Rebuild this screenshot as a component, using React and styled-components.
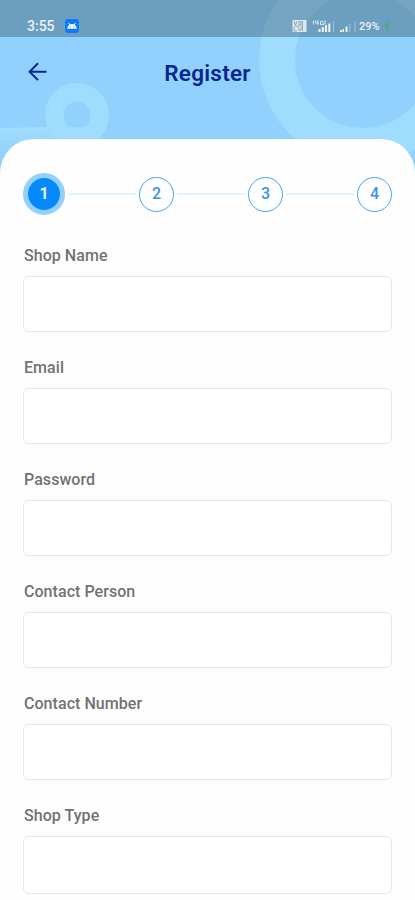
import React, { Fragment, useState } from "react";
import styled, { createGlobalStyle } from "styled-components";

const GlobalStyle = createGlobalStyle`
  * {
    box-sizing: border-box;
  }

  body {
    margin: 0;
    background-color: #fefefe;
    font-family: Roboto, "Liberation Sans", sans-serif;
  }
`;

const Screen = styled.div`
  position: relative;
  width: 100%;
  height: 900px;
  display: flex;
  flex-direction: column;
  overflow: hidden;
  background-color: #92d1fd;
`;

const Backdrop = styled.svg`
  position: absolute;
  top: 0;
  left: 0;
`;

const StatusBar = styled.div`
  position: relative;
  flex: none;
  height: 37px;
  display: flex;
  justify-content: space-between;
  align-items: flex-start;
  padding: 18px 25px 0 27px;
  background-color: rgba(47, 75, 92, 0.38);
`;

const StatusGroup = styled.div`
  display: flex;
  align-items: center;
  height: 16px;
`;

const Clock = styled.span`
  width: 38px;
  color: #e8f1f6;
  font-size: 14px;
  font-weight: 500;
`;

const Battery = styled.span`
  width: 25px;
  color: #e8f1f6;
  font-size: 11px;
  font-weight: 500;
`;

const Header = styled.header`
  position: relative;
  flex: none;
  height: 102px;
  display: grid;
  grid-template-columns: 48px 1fr 48px;
  align-items: start;
  padding: 22px 0 0;
`;

const BackButton = styled.button`
  display: flex;
  margin: 3px 0 0 27px;
  padding: 0;
  border: none;
  background: none;
  cursor: pointer;
`;

const Title = styled.h1`
  margin: 0;
  color: #08268f;
  font-size: 22.5px;
  font-weight: 600;
  line-height: 28px;
  letter-spacing: 0.25px;
  text-align: center;
`;

const Sheet = styled.main`
  position: relative;
  flex: 1;
  padding: 34px 23px 0;
  border-radius: 34px 34px 0 0;
  background-color: #fefefe;
`;

const Stepper = styled.div`
  display: flex;
  align-items: center;
  height: 42px;
`;

const Step = styled.button`
  flex: none;
  width: ${({ $active }) => ($active ? "42px" : "35px")};
  height: ${({ $active }) => ($active ? "42px" : "35px")};
  padding: 0;
  border: ${({ $active }) =>
    $active ? "5px solid #94d0fc" : "1.5px solid #4ba3ed"};
  border-radius: 50%;
  background-color: ${({ $active }) => ($active ? "#0789fb" : "#fefefe")};
  color: ${({ $active }) => ($active ? "#e9f7ff" : "#3694ea")};
  font-family: inherit;
  font-size: 16px;
  font-weight: ${({ $active }) => ($active ? 700 : 500)};
  line-height: 1;
  cursor: pointer;
`;

const StepLine = styled.div`
  flex: 1;
  height: 2px;
  margin: 0 3px;
  background-color: #e5f1fc;
`;

const Form = styled.form`
  display: flex;
  flex-direction: column;
  gap: 25px;
  margin-top: 31px;
`;

const Field = styled.label`
  display: flex;
  flex-direction: column;
  gap: 10px;
`;

const FieldName = styled.span`
  padding-left: 1px;
  color: #727272;
  font-size: 16px;
  font-weight: 500;
  line-height: 20px;
  letter-spacing: 0.05px;
`;

const Input = styled.input`
  width: 100%;
  height: ${({ $tall }) => ($tall ? "58px" : "56px")};
  margin-bottom: 1px;
  padding: 0 14px;
  border: 1.5px solid #e6e6e6;
  border-radius: 6px;
  background-color: #fff;
  color: #444;
  font-family: inherit;
  font-size: 16px;
  outline: none;
`;

const steps = [1, 2, 3, 4];

const fields = [
  { name: "shopName", label: "Shop Name" },
  { name: "email", label: "Email", type: "email" },
  { name: "password", label: "Password", type: "password" },
  { name: "contactPerson", label: "Contact Person" },
  { name: "contactNumber", label: "Contact Number", type: "tel" },
  { name: "shopType", label: "Shop Type", tall: true },
];

const HeaderArt = () => (
  <Backdrop width="415" height="180" viewBox="0 0 415 180" fill="none">
    <defs>
      <linearGradient id="tail" x1="0" y1="127" x2="0" y2="158" gradientUnits="userSpaceOnUse">
        <stop stopColor="#a0dcfd" />
        <stop offset="1" stopColor="#92d1fd" />
      </linearGradient>
    </defs>
    <circle cx="363" cy="60" r="86" stroke="#a0dcfd" strokeWidth="36" />
    <path d="M0 128 L48 127 H80 V160 H0 Z" fill="url(#tail)" />
    <circle cx="77" cy="115" r="22.5" stroke="#a0dcfd" strokeWidth="19" />
    <path d="M64 115a13 13.5 0 0 1 26 0c0 5-1 9-5 12H69c-4-3-5-7-5-12z" fill="#92d1fd" />
  </Backdrop>
);

const AndroidBadge = () => (
  <svg width="14" height="14" viewBox="0 0 14 14">
    <rect width="14" height="14" rx="3.5" fill="#0b7af4" />
    <path d="M2.2 9.8a4.8 4.8 0 0 1 9.6 0z" fill="#f3fbff" />
    <path d="M3.4 3.9l1.4 2M10.6 3.9l-1.4 2" stroke="#f3fbff" />
    <circle cx="5" cy="8" r=".6" fill="#0b7af4" />
    <circle cx="9" cy="8" r=".6" fill="#0b7af4" />
  </svg>
);

// volte badge, 4G signal and second sim signal
const SignalIcons = () => (
  <svg width="67" height="14" viewBox="0 0 67 14" fill="#edf5f8">
    <rect x="0.5" y="1" width="14" height="12" fill="#dce8ee" />
    <path
      d="M2 2l1.5 4L5 2M7 2.5h2v3H7zM2 8v4h3M6 8l2 4 2-4M2.5 7h7M10.5 2v10"
      stroke="#7998aa"
      strokeWidth="0.8"
      fill="none"
    />
    <path
      d="M21.5 1.5v4M23.5 1.5v2.5h3M25.8 1v5M31.5 2.3h-3v3.3h3V4.2h-1M33 1.5v4"
      stroke="#dce9ef"
      strokeWidth="1"
      fill="none"
    />
    <rect x="26.5" y="10" width="2" height="3" />
    <rect x="29.8" y="8" width="2" height="5" />
    <rect x="33" y="6" width="2" height="7" />
    <rect x="36.3" y="4.5" width="2" height="8.5" />
    <rect x="41" y="2" width="1" height="11" opacity="0.4" />
    <rect x="48" y="11" width="2" height="2" />
    <rect x="50.5" y="10" width="1.5" height="3" />
    <rect x="53.5" y="7.5" width="2" height="5.5" />
    <rect x="57" y="5" width="1.5" height="8" opacity="0.3" />
    <rect x="62.5" y="2" width="1" height="11" opacity="0.4" />
  </svg>
);

const Charging = () => (
  <svg width="6" height="12" viewBox="0 0 6 12">
    <path d="M4 0L0 7h2.5L2 12l4-7H3.5z" fill="#43ad83" />
  </svg>
);

const BackArrow = () => (
  <svg width="20" height="20" viewBox="0 0 20 20" fill="none">
    <path d="M19.5 9.7H2.5M11 1.3L2.6 9.7l8.4 8.4" stroke="#08268f" strokeWidth="2" />
  </svg>
);

const App = () => {
  const [step, setStep] = useState(1);
  const [values, setValues] = useState({});

  const handleChange = (e) => {
    setValues({ ...values, [e.target.name]: e.target.value });
  };

  return (
    <>
      <GlobalStyle />
      <Screen>
        <HeaderArt />
        <StatusBar>
          <StatusGroup>
            <Clock>3:55</Clock>
            <AndroidBadge />
          </StatusGroup>
          <StatusGroup>
            <SignalIcons />
            <Battery>29%</Battery>
            <Charging />
          </StatusGroup>
        </StatusBar>
        <Header>
          <BackButton type="button" aria-label="Back">
            <BackArrow />
          </BackButton>
          <Title>Register</Title>
        </Header>
        <Sheet>
          <Stepper>
            {steps.map((n) => (
              <Fragment key={n}>
                {n > 1 && <StepLine />}
                <Step type="button" $active={n === step} onClick={() => setStep(n)}>
                  {n}
                </Step>
              </Fragment>
            ))}
          </Stepper>
          <Form>
            {fields.map(({ name, label, type = "text", tall }) => (
              <Field key={name}>
                <FieldName>{label}</FieldName>
                <Input
                  name={name}
                  type={type}
                  $tall={tall}
                  value={values[name] || ""}
                  onChange={handleChange}
                />
              </Field>
            ))}
          </Form>
        </Sheet>
      </Screen>
    </>
  );
};

export default App;
